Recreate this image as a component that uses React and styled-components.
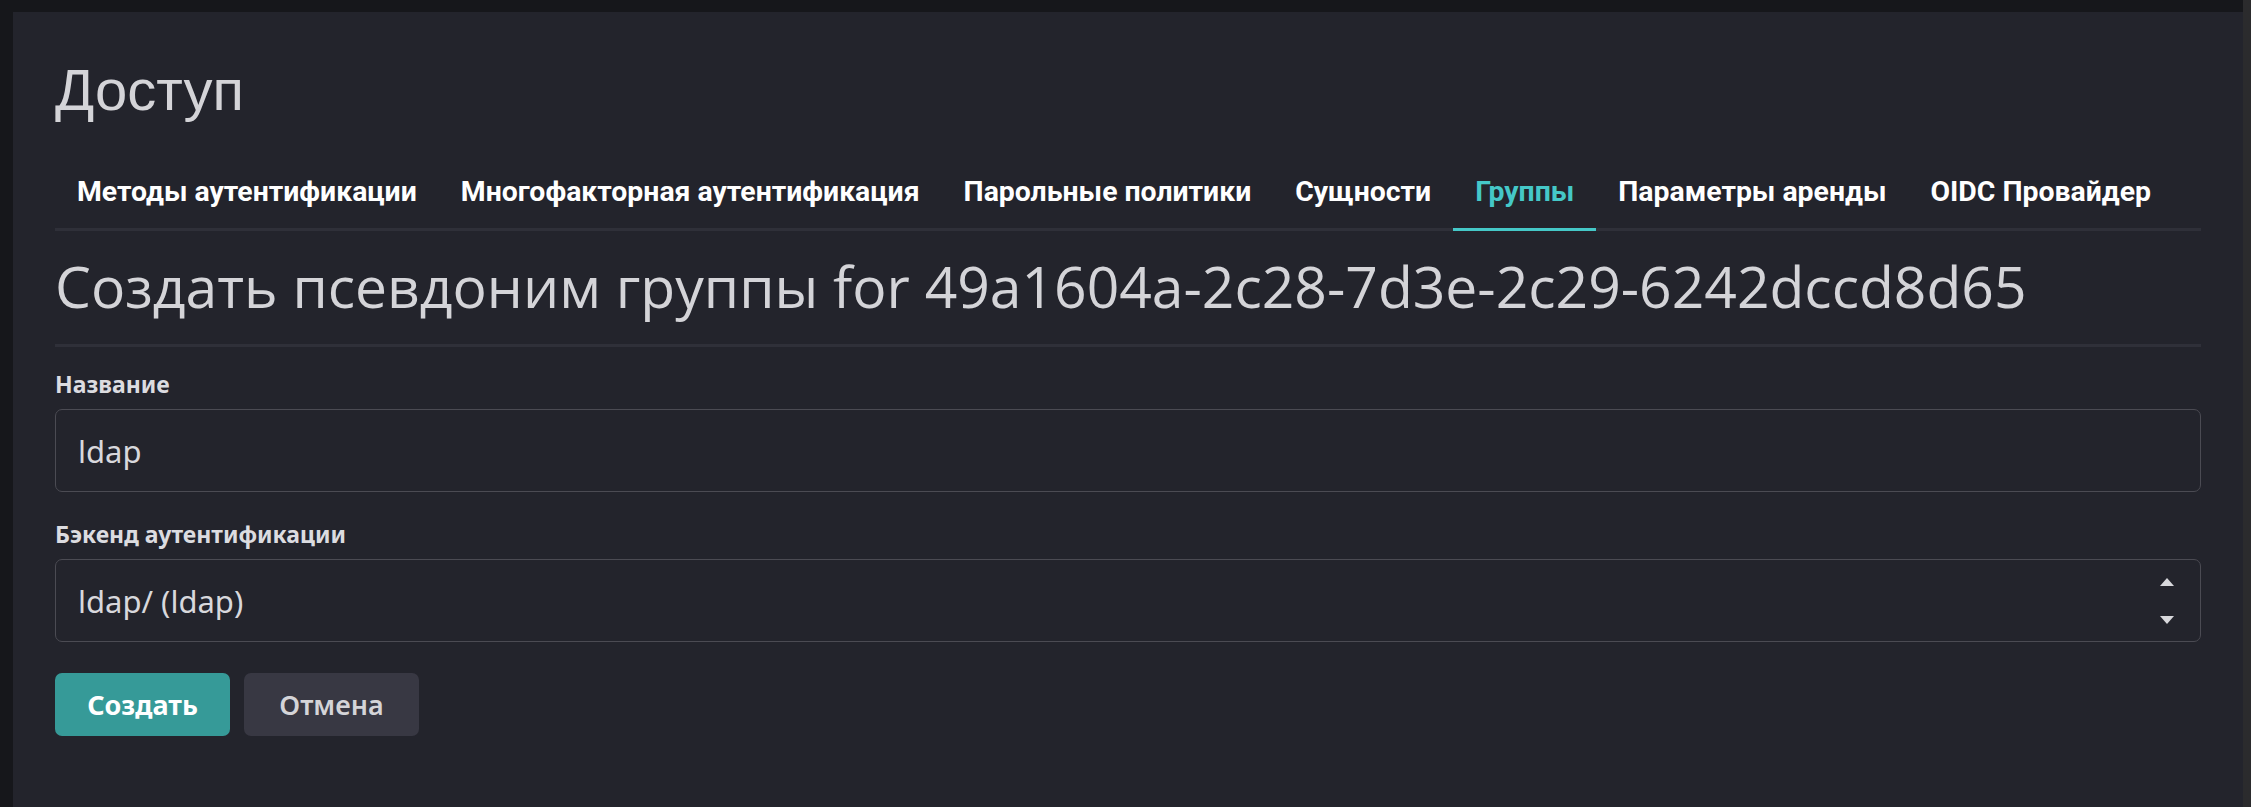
import React from "react";
import styled, { createGlobalStyle } from "styled-components";

const Global = createGlobalStyle`
  html, body { margin: 0; padding: 0; background: #16171b; }
  body { font-family: Roboto, "Noto Sans", sans-serif; }
  * { box-sizing: border-box; }
`;

const Shell = styled.div`
  display: flex;
  height: 807px;
  overflow: hidden;
`;

const Frame = styled.div`
  flex: 1;
  padding: 12px 0 0 13px;
  display: flex;
`;

const ScrollTrack = styled.div`
  width: 8px;
  background: #2b2b2d;
`;

const Panel = styled.main`
  flex: 1;
  background: #23242c;
  padding: 46px 42px 0 42px;
`;

const PageTitle = styled.h1`
  margin: 0;
  font-family: "Liberation Sans", Arial, sans-serif;
  font-weight: 400;
  font-size: 58px;
  line-height: 64px;
  color: #d4d4d8;
`;

const Tabs = styled.nav`
  display: flex;
  margin-top: 52px;
  border-bottom: 3px solid #2f3039;
`;

const Tab = styled.a`
  display: block;
  padding: 0 22px 18px;
  margin-bottom: -3px;
  font-family: Roboto, sans-serif;
  font-weight: 700;
  font-size: 28.4px;
  line-height: 36px;
  color: ${(p) => (p.$active ? "#45c8c8" : "#ffffff")};
  border-bottom: 3px solid ${(p) => (p.$active ? "#45c8c8" : "transparent")};
  white-space: nowrap;
`;

const FormTitle = styled.h2`
  margin: 0;
  padding: 23px 0 26px;
  font-family: "Open Sans", sans-serif;
  font-weight: 400;
  font-size: 57px;
  line-height: 64px;
  color: #d4d4d8;
  border-bottom: 3px solid #2f3039;
`;

const Form = styled.form`
  display: flex;
  flex-direction: column;
  padding-top: 21px;
`;

const Field = styled.div`
  display: flex;
  flex-direction: column;
  margin-bottom: 26px;
`;

const Label = styled.label`
  font-family: "Noto Sans", sans-serif;
  font-weight: 700;
  font-size: 23px;
  line-height: 32px;
  color: #dcdce0;
  margin-bottom: 9px;
`;

const Input = styled.div`
  height: 83px;
  border: 1px solid #4b4b53;
  border-radius: 7px;
  background: #23242c;
  display: flex;
  align-items: center;
  justify-content: space-between;
  padding: 0 26px 0 22px;
  font-family: "Noto Sans", sans-serif;
  font-size: 31px;
  color: #d8d8dc;
`;

const Arrows = styled.div`
  display: flex;
  flex-direction: column;
  gap: 30px;
`;

const Buttons = styled.div`
  display: flex;
  gap: 14px;
  margin-top: 5px;
`;

const Button = styled.button`
  width: 175px;
  height: 63px;
  border: none;
  border-radius: 7px;
  font-family: "Noto Sans", sans-serif;
  font-weight: ${(p) => (p.$primary ? 700 : 600)};
  font-size: 27px;
  color: ${(p) => (p.$primary ? "#ffffff" : "#d4d4d8")};
  background: ${(p) => (p.$primary ? "#369a98" : "#383843")};
`;

const tabs = [
  "Методы аутентификации",
  "Многофакторная аутентификация",
  "Парольные политики",
  "Сущности",
  "Группы",
  "Параметры аренды",
  "OIDC Провайдер",
];

export default function App() {
  return (
    <Shell>
      <Global />
      <Frame>
        <Panel>
          <PageTitle>Доступ</PageTitle>
          <Tabs>
            {tabs.map((t) => (
              <Tab key={t} $active={t === "Группы"}>
                {t}
              </Tab>
            ))}
          </Tabs>
          <FormTitle>Создать псевдоним группы for 49a1604a-2c28-7d3e-2c29-6242dccd8d65</FormTitle>
          <Form>
            <Field>
              <Label>Название</Label>
              <Input>ldap</Input>
            </Field>
            <Field>
              <Label>Бэкенд аутентификации</Label>
              <Input>
                <span>ldap/ (ldap)</span>
                <Arrows>
                  <svg width="14" height="8" viewBox="0 0 14 8">
                    <path d="M7 0 L14 8 L0 8 Z" fill="#d8d8dc" />
                  </svg>
                  <svg width="14" height="8" viewBox="0 0 14 8">
                    <path d="M0 0 L14 0 L7 8 Z" fill="#d8d8dc" />
                  </svg>
                </Arrows>
              </Input>
            </Field>
            <Buttons>
              <Button $primary type="button">Создать</Button>
              <Button type="button">Отмена</Button>
            </Buttons>
          </Form>
        </Panel>
      </Frame>
      <ScrollTrack />
    </Shell>
  );
}
